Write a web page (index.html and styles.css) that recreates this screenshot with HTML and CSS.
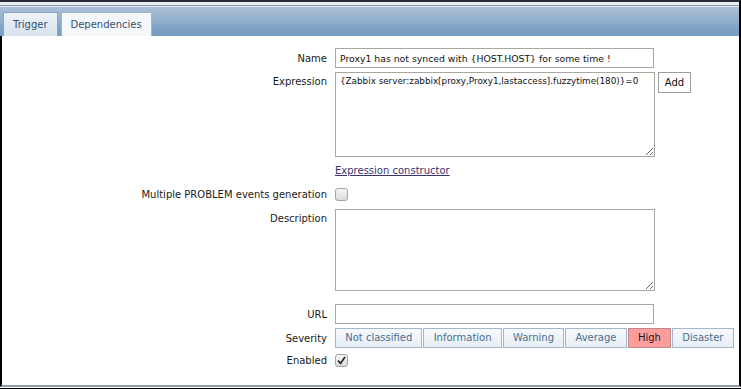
FILE: index.html
```html
<!DOCTYPE html>
<html>
<head>
    <link rel="stylesheet" href="styles.css">
</head>
<body>

    <div class="window">
        <div class="tabs-bar">
            <div class="tab tab-active">Trigger</div>
            <div class="tab">Dependencies</div>
        </div>

        <div class="panel">
            <div class="row row-name">
                <label class="lbl" for="name">Name</label>
                <input class="text text-long" type="text" id="name" value="Proxy1 has not synced with {HOST.HOST} for some time !">
            </div>

            <div class="row row-expr">
                <label class="lbl lbl-top" for="expression">Expression</label>
                <textarea class="area area-expr" id="expression" wrap="off">{Zabbix server:zabbix[proxy,Proxy1,lastaccess].fuzzytime(180)}=0</textarea>
                <button class="btn-add" type="button">Add</button>
            </div>

            <div class="row row-link">
                <span class="lbl"></span>
                <a class="link" href="#">Expression constructor</a>
            </div>

            <div class="row row-multi">
                <span class="lbl">Multiple PROBLEM events generation</span>
                <span class="check"></span>
            </div>

            <div class="row row-desc">
                <label class="lbl lbl-top" for="description">Description</label>
                <textarea class="area area-desc" id="description"></textarea>
            </div>

            <div class="row row-url">
                <label class="lbl" for="url">URL</label>
                <input class="text text-long" type="text" id="url">
            </div>

            <div class="row row-sev">
                <span class="lbl">Severity</span>
                <div class="severity">
                    <span class="sev">Not classified</span>
                    <span class="sev">Information</span>
                    <span class="sev">Warning</span>
                    <span class="sev">Average</span>
                    <span class="sev sev-high">High</span>
                    <span class="sev">Disaster</span>
                </div>
            </div>

            <div class="row row-enabled">
                <span class="lbl">Enabled</span>
                <span class="check check-on">
                    <svg width="9" height="9" viewBox="0 0 9 9"><path d="M1 4.5 L3.5 7.5 L8 1" fill="none" stroke="#222" stroke-width="1.6"/></svg>
                </span>
            </div>
        </div>
        <div class="window-bottom"></div>
    </div>

</body>
</html>
```

FILE: styles.css
```css
body {
    margin: 0;
    padding: 0;
    background-color: #fff;
    font-family: "DejaVu Sans", Verdana, sans-serif;
    font-size: 10px;
    color: #1a1a1a;
}

.window {
    width: 741px;
    height: 389px;
    overflow: hidden;
}

.tabs-bar {
    height: 29px;
    border-top: 2px solid #2a2e34;
    background: linear-gradient(#e9eef3 0, #e9eef3 3px, #8294a8 3px, #8294a8 4px, #e4ebf2 4px, #e4ebf2 5px, #a9c0d7 5px, #95b1cd 17px, #7aa0c4 28px, #799ec2 34px);
    border-right: 2px solid #000;
    padding: 5px 0 0 3px;
    display: flex;
    align-items: flex-end;
    gap: 3px;
}

.tab {
    height: 23px;
    line-height: 23px;
    padding: 0 9px;
    border: 1px solid #9fb6cc;
    border-bottom: none;
    background: #f4f8fb;
    color: #34506e;
}

.tab-active {
    border-color: #8aa4bd;
    background: linear-gradient(#eef3f8, #d6e2ed);
}

.panel {
    border-left: 2px solid #000;
    border-right: 2px solid #000;
    border-bottom: 2px solid #8d9db0;
    padding-top: 12px;
    box-sizing: border-box;
    height: 351px;
}

.window-bottom {
    height: 1px;
    border-bottom: 1px solid #000;
}

.row {
    display: flex;
    align-items: center;
}

.lbl {
    width: 325px;
    flex: none;
    text-align: right;
    padding-right: 8px;
}

.lbl-top {
    align-self: flex-start;
    padding-top: 4px;
}

.row-expr {
    align-items: flex-start;
    margin-top: 4px;
}

.row-link {
    height: 23px;
    padding-top: 2px;
}

.row-multi {
    margin-top: 6px;
}

.row-desc {
    margin-top: 8px;
}

.row-url {
    margin-top: 13px;
}

.row-sev {
    margin-top: 4px;
}

.row-enabled {
    margin-top: 6px;
}

.text,
.area {
    font-family: "DejaVu Sans", Verdana, sans-serif;
    font-size: 9.3px;
    color: #111;
    border: 1px solid #a8a89e;
    margin: 0;
    box-sizing: border-box;
    outline: none;
}

.text {
    height: 20px;
    padding: 0 4px;
}

.text-long {
    width: 319px;
}

.area {
    width: 320px;
    padding: 3px 4px;
    resize: both;
    white-space: pre;
    overflow: hidden;
}

.area-expr {
    height: 85px;
    font-size: 8.8px;
}

.area-desc {
    height: 82px;
}

.btn-add {
    margin-left: 3px;
    width: 33px;
    height: 21px;
    padding: 0;
    font-family: "DejaVu Sans", Verdana, sans-serif;
    font-size: 10px;
    color: #111;
    background: #fff;
    border: 1px solid #9d9d9d;
}

.link {
    color: #3a3470;
    text-decoration: underline;
}

.check {
    width: 11px;
    height: 11px;
    border: 1px solid #a3a3a3;
    border-radius: 3px;
    background: linear-gradient(#f4f4f4, #dcdcdc);
    display: flex;
    align-items: center;
    justify-content: center;
}

.severity {
    display: flex;
    gap: 1px;
}

.sev {
    height: 18px;
    line-height: 18px;
    padding: 0 9.2px;
    white-space: nowrap;
    border: 1px solid #a5b8cb;
    background: linear-gradient(#f6f9fc, #e6eef5);
    color: #4d6e90;
}

.sev-high {
    background: #ff9c9c;
    border-color: #bb8a8a;
    color: #1a1a1a;
}
```
